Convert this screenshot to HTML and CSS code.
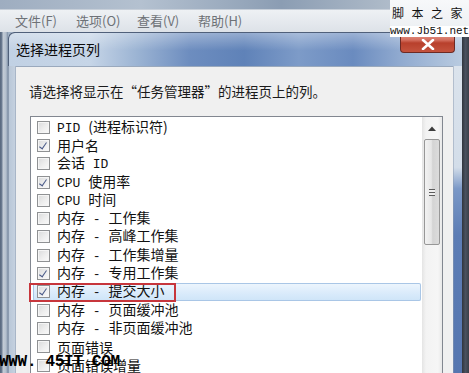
FILE: index.html
```html
<!DOCTYPE html>
<html lang="zh-CN">
<head>
<meta charset="utf-8">
<title>选择进程页列</title>
<link rel="stylesheet" href="styles.css">
</head>
<body>
<div class="screen">
  <div class="topstrip"></div>
  <div class="menubar">
    <span class="mi">文件(F)</span>
    <span class="mi">选项(O)</span>
    <span class="mi">查看(V)</span>
    <span class="mi">帮助(H)</span>
  </div>
  <div class="main">
    <div class="leftedge"></div>
    <div class="dialog">
      <div class="titlebar">
        <span class="title">选择进程页列</span>
        <div class="close">
          <svg width="14" height="11" viewBox="0 0 14 11"><path d="M2 1 L12 10 M12 1 L2 10" stroke="#fff" stroke-width="2.6" stroke-linecap="round"/></svg>
        </div>
      </div>
      <div class="body">
        <div class="lframe"></div>
        <div class="content">
          <p class="instr">请选择将显示在“任务管理器”的进程页上的列。</p>
          <div class="listbox">
            <ul class="items">
              <li class="item"><span class="cb"></span><span class="txt"><span class="lat">PID </span>(进程标识符)</span></li>
              <li class="item"><span class="cb on"></span><span class="txt">用户名</span></li>
              <li class="item"><span class="cb"></span><span class="txt">会话<span class="lat"> ID</span></span></li>
              <li class="item"><span class="cb on"></span><span class="txt"><span class="lat">CPU </span>使用率</span></li>
              <li class="item"><span class="cb"></span><span class="txt"><span class="lat">CPU </span>时间</span></li>
              <li class="item"><span class="cb"></span><span class="txt">内存<span class="lat"> - </span>工作集</span></li>
              <li class="item"><span class="cb"></span><span class="txt">内存<span class="lat"> - </span>高峰工作集</span></li>
              <li class="item"><span class="cb"></span><span class="txt">内存<span class="lat"> - </span>工作集增量</span></li>
              <li class="item"><span class="cb on"></span><span class="txt">内存<span class="lat"> - </span>专用工作集</span></li>
              <li class="item sel"><span class="cb on"></span><span class="txt">内存<span class="lat"> - </span>提交大小</span><span class="redbox"></span></li>
              <li class="item"><span class="cb"></span><span class="txt">内存<span class="lat"> - </span>页面缓冲池</span></li>
              <li class="item"><span class="cb"></span><span class="txt">内存<span class="lat"> - </span>非页面缓冲池</span></li>
              <li class="item"><span class="cb"></span><span class="txt">页面错误</span></li>
              <li class="item"><span class="cb"></span><span class="txt">页面错误增量</span></li>
            </ul>
            <div class="scrollbar">
              <div class="sb-up">
                <svg width="8" height="5" viewBox="0 0 8 5"><path d="M0 5 L4 0.5 L8 5 Z" fill="#3c3c3c"/></svg>
              </div>
              <div class="sb-thumb"><span class="grip"></span></div>
            </div>
          </div>
        </div>
        <div class="rframe"></div>
      </div>
    </div>
    <div class="rightedge"></div>
  </div>
  <div class="wm-top">
    <div class="wm-l1">脚本之家</div>
    <div class="wm-l2">www.Jb51.net</div>
  </div>
  <div class="wm-bottom">WWW. 45IT.COM</div>
</div>
</body>
</html>
```
FILE: styles.css
```css
html, body {
  margin: 0;
  padding: 0;
  background: #9fb0c4;
}
.screen {
  position: relative;
  width: 469px;
  height: 373px;
  overflow: hidden;
  font-family: "Noto Sans CJK SC", "Noto Sans", sans-serif;
}
.topstrip {
  height: 9px;
  background: linear-gradient(90deg, #9eadc0 0%, #b4c1d0 30%, #8b9db3 60%, #aab7c6 80%, #c9d2dc 100%);
}
.menubar {
  height: 23px;
  display: flex;
  align-items: center;
  padding-left: 15px;
  background: linear-gradient(180deg, #eef1f4 0%, #e4e8ed 60%, #dde2e8 100%);
  border-top: 1px solid #c7cfd9;
  box-sizing: border-box;
}
.mi {
  flex: none;
  width: 61px;
  font-size: 13px;
  line-height: 16px;
  color: #6e7277;
}
.main {
  display: flex;
  height: 341px;
}
.leftedge {
  flex: none;
  width: 8px;
  background: linear-gradient(90deg, #56657b 0px, #6f7f95 2px, #c4ccd6 3px, #b3bfcd 6px, #7d8ea5 8px);
}
.dialog {
  flex: none;
  width: 454px;
  display: flex;
  flex-direction: column;
}
.titlebar {
  flex: none;
  height: 34px;
  display: flex;
  align-items: center;
  padding-left: 8px;
  border-top-left-radius: 6px;
  box-shadow: inset 1px 1px 0 #50607a;
  background:
    linear-gradient(180deg, rgba(255,255,255,0.35) 0%, rgba(255,255,255,0) 55%),
    linear-gradient(90deg, #c1d1e4 0%, #c6d5e7 18%, #9db5d4 28%, #6d8dbf 40%, #5f82b8 52%, #7d9bc8 64%, #6a8bbf 76%, #8fa9cf 86%, #b9cbe0 100%);
}
.title {
  font-size: 14px;
  line-height: 18px;
  color: #0b0b0b;
}
.close {
  margin-left: auto;
  margin-right: 7px;
  align-self: flex-start;
  width: 55px;
  height: 21px;
  padding-top: 5px;
  display: flex;
  align-items: center;
  justify-content: center;
  border-radius: 0 0 4px 4px;
  border: 1px solid #6d2a24;
  border-top: none;
  box-sizing: border-box;
  background: linear-gradient(180deg, #e6a49a 0%, #d46f5f 40%, #b8402c 55%, #c4533e 100%);
}
.body {
  flex: 1;
  display: flex;
  min-height: 0;
}
.lframe {
  flex: none;
  width: 8px;
  background: linear-gradient(90deg, #5f7088 0px, #b9c7d8 1px, #c5d1df 7px, #8c9bb0 8px);
}
.rframe {
  flex: none;
  width: 9px;
  background:
    linear-gradient(90deg, #8d9bb0 0px, rgba(0,0,0,0) 1px),
    linear-gradient(180deg, #dbe3ec 0%, #d3dde9 33%, #7b98c7 40%, #5d7db5 55%, #5676b0 100%);
}
.rightedge {
  flex: none;
  width: 7px;
  background: linear-gradient(90deg, #30353d 0%, #4a5260 50%, #3a3f48 100%);
}
.content {
  flex: none;
  width: 437px;
  box-sizing: border-box;
  padding-left: 13px;
  background: #f0f0f0;
  display: flex;
  flex-direction: column;
  border-top: 1px solid #9aa9bd;
}
.instr {
  margin: 15px 0 0;
  font-size: 13.5px;
  line-height: 18px;
  color: #1a1a1a;
  white-space: nowrap;
}
.listbox {
  flex: 1;
  margin: 16px 0 0 1px;
  width: 413px;
  box-sizing: border-box;
  border: 1px solid #828790;
  border-bottom: none;
  background: #fff;
  display: flex;
}
.items {
  flex: 1;
  list-style: none;
  margin: 0;
  padding: 1px 1px 0 2px;
}
.item {
  position: relative;
  height: 18.3px;
  display: flex;
  align-items: center;
  gap: 7px;
  padding-left: 4px;
}
.item.sel {
  background: linear-gradient(180deg, #eef6fd 0%, #dcecfb 50%, #cde4f8 100%);
  box-shadow: inset 0 0 0 1px #a9c6e6;
  border-radius: 2px;
}
.cb {
  flex: none;
  width: 13px;
  height: 13px;
  box-sizing: border-box;
  border: 1px solid #8f9193;
  background: linear-gradient(135deg, #d9dadb 0%, #eeeeee 55%, #fafafa 100%);
  box-shadow: inset 0 0 0 1px #f5f5f5;
  position: relative;
}
.cb.on::after {
  content: "";
  position: absolute;
  left: 3px;
  top: 1px;
  width: 3px;
  height: 7px;
  border: solid #4a5a88;
  border-width: 0 1.6px 1.6px 0;
  transform: rotate(35deg);
}
.txt {
  font-size: 14px;
  line-height: 18px;
  color: #111;
  white-space: pre;
}
.lat {
  font-family: "Liberation Mono", monospace;
  font-size: 13px;
}
.redbox {
  position: absolute;
  left: -4px;
  top: 0;
  width: 147px;
  height: 19px;
  box-sizing: border-box;
  border: 2px solid #c7363c;
}
.scrollbar {
  flex: none;
  width: 20px;
  display: flex;
  flex-direction: column;
  align-items: center;
  background: linear-gradient(90deg, #e4e4e4 0%, #f3f3f3 20%, #f6f6f6 80%, #e8e8e8 100%);
}
.sb-up {
  margin-top: 3px;
  width: 16px;
  height: 17px;
  display: flex;
  align-items: center;
  justify-content: center;
}
.sb-thumb {
  margin-top: 2px;
  width: 16px;
  height: 106px;
  box-sizing: border-box;
  border: 1px solid #979797;
  border-radius: 2px;
  background: linear-gradient(90deg, #f2f2f2 0%, #e6e6e6 45%, #d4d4d4 55%, #dcdcdc 100%);
  display: flex;
  align-items: center;
  justify-content: center;
}
.grip {
  width: 6px;
  height: 7px;
  background: repeating-linear-gradient(180deg, #5c5c5c 0px, #5c5c5c 1px, #eeeeee 1px, #eeeeee 3px);
}
.wm-top {
  position: absolute;
  left: 390px;
  top: 0;
  width: 79px;
}
.wm-l1 {
  height: 26px;
  padding: 4px 0 0 2px;
  box-sizing: border-box;
  font-family: "Noto Sans CJK SC", sans-serif;
  font-size: 12px;
  line-height: 18px;
  letter-spacing: 7.5px;
  white-space: nowrap;
  overflow: hidden;
  color: #111;
  background: linear-gradient(180deg, #f7f8fa 0%, #eef1f4 100%);
}
.wm-l2 {
  height: 11px;
  font-family: "Liberation Mono", monospace;
  font-size: 11px;
  line-height: 11px;
  white-space: nowrap;
  color: #111;
  background: #fff;
}
.wm-bottom {
  position: absolute;
  left: -1px;
  top: 354px;
  font-family: "Liberation Mono", monospace;
  font-weight: bold;
  font-size: 16px;
  line-height: 16px;
  letter-spacing: -0.3px;
  color: #000;
  white-space: pre;
}
```
